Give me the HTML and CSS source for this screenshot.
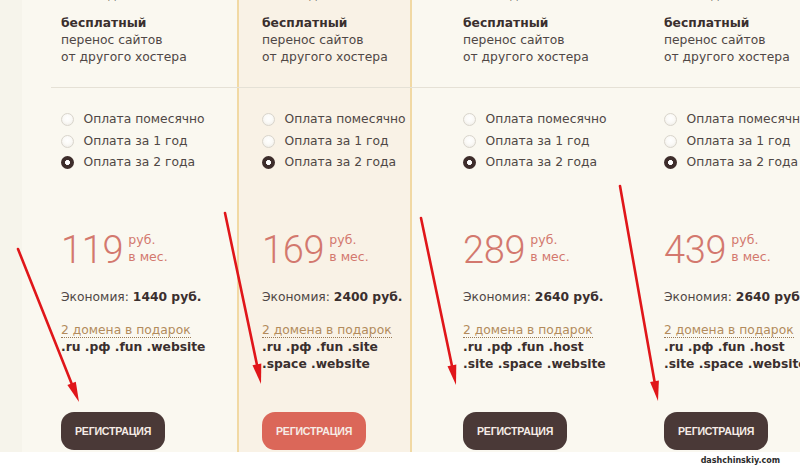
FILE: index.html
```html
<!DOCTYPE html>
<html lang="ru">
<head>
<meta charset="utf-8">
<title>Тарифы</title>
<link rel="stylesheet" href="styles.css">
</head>
<body>
<div class="page">
  <div class="plans">
    <div class="plan">
      <p class="clip">Объём диска</p>
      <p class="feat"><b>бесплатный</b><br>перенос сайтов<br>от другого хостера</p>
      <hr class="sep sep-first">
      <ul class="pay">
        <li><span class="radio"></span>Оплата помесячно</li>
        <li><span class="radio"></span>Оплата за 1 год</li>
        <li><span class="radio on"></span>Оплата за 2 года</li>
      </ul>
      <div class="price"><span class="num">119</span><span class="unit">руб.<br>в мес.</span></div>
      <p class="econ">Экономия: <b>1440 руб.</b></p>
      <p class="gift"><span class="gift-link">2 домена в подарок</span></p>
      <p class="zones">.ru .рф .fun .website</p>
      <a class="btn">Регистрация</a>
    </div>
    <div class="plan featured">
      <p class="clip">Объём диска</p>
      <p class="feat"><b>бесплатный</b><br>перенос сайтов<br>от другого хостера</p>
      <hr class="sep">
      <ul class="pay">
        <li><span class="radio"></span>Оплата помесячно</li>
        <li><span class="radio"></span>Оплата за 1 год</li>
        <li><span class="radio on"></span>Оплата за 2 года</li>
      </ul>
      <div class="price"><span class="num">169</span><span class="unit">руб.<br>в мес.</span></div>
      <p class="econ">Экономия: <b>2400 руб.</b></p>
      <p class="gift"><span class="gift-link">2 домена в подарок</span></p>
      <p class="zones">.ru .рф .fun .site<br>.space .website</p>
      <a class="btn btn-hot">Регистрация</a>
    </div>
    <div class="plan">
      <p class="clip">Объём диска</p>
      <p class="feat"><b>бесплатный</b><br>перенос сайтов<br>от другого хостера</p>
      <hr class="sep">
      <ul class="pay">
        <li><span class="radio"></span>Оплата помесячно</li>
        <li><span class="radio"></span>Оплата за 1 год</li>
        <li><span class="radio on"></span>Оплата за 2 года</li>
      </ul>
      <div class="price"><span class="num">289</span><span class="unit">руб.<br>в мес.</span></div>
      <p class="econ">Экономия: <b>2640 руб.</b></p>
      <p class="gift"><span class="gift-link">2 домена в подарок</span></p>
      <p class="zones">.ru .рф .fun .host<br>.site .space .website</p>
      <a class="btn">Регистрация</a>
    </div>
    <div class="plan">
      <p class="clip">Объём диска</p>
      <p class="feat"><b>бесплатный</b><br>перенос сайтов<br>от другого хостера</p>
      <hr class="sep">
      <ul class="pay">
        <li><span class="radio"></span>Оплата помесячно</li>
        <li><span class="radio"></span>Оплата за 1 год</li>
        <li><span class="radio on"></span>Оплата за 2 года</li>
      </ul>
      <div class="price"><span class="num">439</span><span class="unit">руб.<br>в мес.</span></div>
      <p class="econ">Экономия: <b>2640 руб.</b></p>
      <p class="gift"><span class="gift-link">2 домена в подарок</span></p>
      <p class="zones">.ru .рф .fun .host<br>.site .space .website</p>
      <a class="btn">Регистрация</a>
    </div>
  </div>
  <div class="footer"><span class="mark">dashchinskiy.com</span></div>
  <svg class="arrows" width="800" height="469" viewBox="0 0 800 469">
    <g stroke="#e0161a" stroke-width="2.6" stroke-linecap="round" fill="none">
      <line x1="18" y1="249" x2="71.6" y2="383.4"/>
      <line x1="225" y1="213" x2="256.9" y2="364.4"/>
      <line x1="421" y1="218" x2="451.9" y2="365.4"/>
      <line x1="620" y1="186" x2="654.5" y2="381.3"/>
    </g>
    <g fill="#e0161a">
      <polygon points="79,402 67.4,385.1 75.8,381.7"/>
      <polygon points="261,384 252.5,365.3 261.3,363.5"/>
      <polygon points="456,385 447.5,366.3 456.3,364.5"/>
      <polygon points="658,401 650.1,382.1 658.9,380.5"/>
    </g>
  </svg>
</div>
</body>
</html>
```

FILE: styles.css
```css
html, body {
  margin: 0;
  padding: 0;
  background: #ffffff;
}
body {
  width: 800px;
  height: 469px;
  overflow: hidden;
  font-family: "DejaVu Sans", Verdana, sans-serif;
  font-size: 12.3px;
  line-height: 17px;
  color: #4f4745;
}
.page {
  position: relative;
  width: 800px;
  height: 469px;
}
.plans {
  height: 452px;
  display: grid;
  grid-template-columns: repeat(4, 175px);
  column-gap: 26px;
  padding-left: 36px;
  background: linear-gradient(to right, #f6f4eb 0, #f6f4eb 22px, #faf8f0 22px);
  overflow: hidden;
}
.plan {
  display: flex;
  flex-direction: column;
  align-items: flex-start;
  border: 2px solid transparent;
  border-top: 0;
  border-bottom: 0;
  padding: 0 0 1px 23px;
  min-width: 0;
}
.featured {
  background: #f9f2e6;
  border-color: #f1d9a4;
}
.plan p {
  margin: 0;
}
.clip {
  margin-top: -13px !important;
  height: 17px;
  white-space: nowrap;
}
.feat {
  margin-top: 10.5px !important;
  white-space: nowrap;
}
.feat b {
  color: #3a2f2e;
  font-weight: bold;
}
.sep {
  align-self: flex-start;
  width: 201px;
  margin: 21px 0 0 -25px;
  border: 0;
  border-top: 1px solid #e5e1d6;
  height: 0;
  flex: none;
}
.sep-first {
  width: 211px;
  margin-left: -10px;
}
.pay {
  list-style: none;
  margin: 21.5px 0 0 -0.5px;
  padding: 0;
}
.pay li {
  display: flex;
  align-items: center;
  height: 21.5px;
  white-space: nowrap;
}
.radio {
  box-sizing: border-box;
  width: 13px;
  height: 13px;
  border-radius: 50%;
  border: 1px solid #d9d5cc;
  background: radial-gradient(circle at 50% 40%, #ffffff 0, #fbfaf7 45%, #ebe8e2 100%);
  margin-right: 10px;
  flex: none;
}
.radio.on {
  border: 0;
  background: radial-gradient(circle, #ffffff 0, #ffffff 2.2px, #3d2d2b 2.8px);
}
.price {
  display: flex;
  align-items: flex-start;
  margin-top: 57px;
  color: #d3786e;
}
.num {
  font-family: Roboto, "Liberation Sans", sans-serif;
  font-weight: 300;
  font-size: 38px;
  line-height: 38px;
  letter-spacing: -0.3px;
}
.unit {
  margin-left: 5px;
  margin-top: 0.5px;
  font-size: 12.5px;
  line-height: 17px;
}
.econ {
  margin-top: 20px !important;
  white-space: nowrap;
}
.econ b {
  color: #3a2f2e;
}
.gift {
  margin-top: 16px !important;
  white-space: nowrap;
}
.gift-link {
  color: #b28b5c;
  border-bottom: 1px dotted #9a7a55;
}
.zones {
  font-weight: bold;
  color: #3a2f2e;
  white-space: nowrap;
}
.btn {
  margin-top: auto;
  box-sizing: border-box;
  width: 104px;
  height: 38px;
  border-radius: 13px;
  background: #4a3937;
  color: #f6ece6;
  font-family: "Liberation Sans", Arial, sans-serif;
  font-weight: bold;
  font-size: 10.6px;
  text-transform: uppercase;
  display: flex;
  align-items: center;
  justify-content: center;
  letter-spacing: -0.2px;
  margin-bottom: 1px;
}
.btn-hot {
  background: #db6759;
}
.footer {
  height: 17px;
  display: flex;
  justify-content: flex-end;
  align-items: center;
  padding-right: 20px;
  background: #ffffff;
}
.mark {
  font-family: "DejaVu Sans", sans-serif;
  font-weight: bold;
  font-size: 8px;
  color: #2b2b2b;
}
.arrows {
  position: absolute;
  left: 0;
  top: 0;
  pointer-events: none;
}
```
